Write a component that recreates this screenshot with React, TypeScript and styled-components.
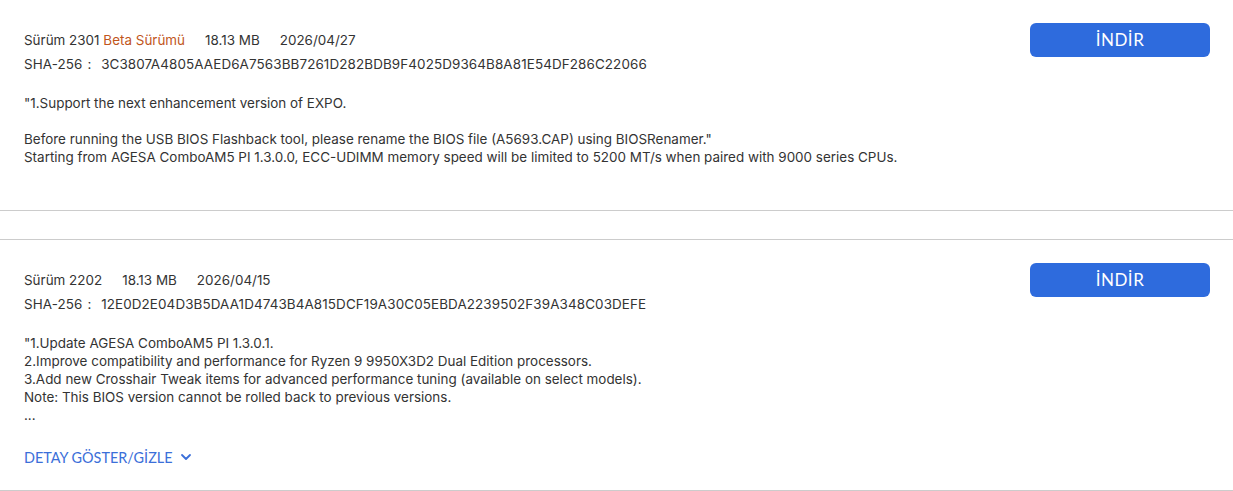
import styled, { createGlobalStyle } from "styled-components";

const GlobalStyle = createGlobalStyle`
  body {
    margin: 0;
    background: #fff;
    font-family: 'Inter', 'Noto Sans', sans-serif;
    color: #333;
  }
`

const List = styled.div`
  display: flex;
  flex-direction: column;
`

const Item = styled.div`
  display: flex;
  justify-content: space-between;
  align-items: flex-start;
  padding: 31px 23px 44px 24px;
  border-bottom: 1px solid #cccccc;
  & + & {
    margin-top: 28px;
    border-top: 1px solid #cccccc;
    padding-bottom: 24px;
  }
`

const Info = styled.div`
  display: flex;
  flex-direction: column;
  font-size: 13.45px;
`

const Meta = styled.div`
  display: flex;
  gap: 20px;
  line-height: 18px;
`

const Beta = styled.span`
  color: #c1561c;
`

const Sha = styled.div`
  line-height: 18px;
  margin-top: 6px;
  word-spacing: 1px;
  letter-spacing: 0.1px;
`

const Notes = styled.div`
  line-height: 18px;
  margin-top: 21px;
  white-space: pre-line;
`

const Toggle = styled.a`
  display: flex;
  align-items: center;
  gap: 7px;
  margin-top: 24px;
  height: 18px;
  font-family: 'Lato', sans-serif;
  font-size: 14.4px;
  color: #3b6fd9;
  cursor: pointer;
`

const DownloadButton = styled.button`
  width: 180px;
  height: 34px;
  margin-top: -8px;
  padding-bottom: 2px;
  border: none;
  border-radius: 6px;
  background: #2e6bdd;
  color: #fff;
  font-family: 'Lato', sans-serif;
  font-size: 17px;
  letter-spacing: 0.5px;
  cursor: pointer;
`

function Chevron() {
  return (
    <svg width="12" height="12" viewBox="0 0 12 12" fill="none">
      <path d="M2 4l4 4 4-4" stroke="#3b6fd9" strokeWidth="1.8" strokeLinecap="round" strokeLinejoin="round" />
    </svg>
  )
}

function App() {
  return (
    <>
      <GlobalStyle />
      <List>
        <Item>
          <Info>
            <Meta>
              <span>Sürüm 2301 <Beta>Beta Sürümü</Beta></span>
              <span>18.13 MB</span>
              <span>2026/04/27</span>
            </Meta>
            <Sha>SHA-256 :&nbsp; 3C3807A4805AAED6A7563BB7261D282BDB9F4025D9364B8A81E54DF286C22066</Sha>
            <Notes>{`"1.Support the next enhancement version of EXPO.

Before running the USB BIOS Flashback tool, please rename the BIOS file (A5693.CAP) using BIOSRenamer."
Starting from AGESA ComboAM5 PI 1.3.0.0, ECC-UDIMM memory speed will be limited to 5200 MT/s when paired with 9000 series CPUs.`}</Notes>
          </Info>
          <DownloadButton>İNDİR</DownloadButton>
        </Item>
        <Item>
          <Info>
            <Meta>
              <span>Sürüm 2202</span>
              <span>18.13 MB</span>
              <span>2026/04/15</span>
            </Meta>
            <Sha>SHA-256 :&nbsp; 12E0D2E04D3B5DAA1D4743B4A815DCF19A30C05EBDA2239502F39A348C03DEFE</Sha>
            <Notes>{`"1.Update AGESA ComboAM5 PI 1.3.0.1.
2.Improve compatibility and performance for Ryzen 9 9950X3D2 Dual Edition processors.
3.Add new Crosshair Tweak items for advanced performance tuning (available on select models).
Note: This BIOS version cannot be rolled back to previous versions.
...`}</Notes>
            <Toggle>DETAY GÖSTER/GİZLE <Chevron /></Toggle>
          </Info>
          <DownloadButton>İNDİR</DownloadButton>
        </Item>
      </List>
    </>
  )
}

export default App;
